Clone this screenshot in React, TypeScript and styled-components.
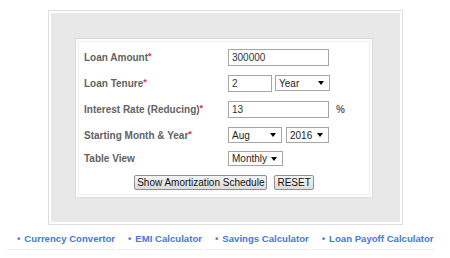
import React from 'react';
import styled, { createGlobalStyle } from 'styled-components';

const GlobalStyle = createGlobalStyle`
  body {
    margin: 0;
    background: #fff;
    font-family: 'Liberation Sans', Arial, sans-serif;
  }
`;

const App = () => {
  return (
    <>
      <GlobalStyle />
      <Page>
        <OuterPanel>
          <GrayArea>
            <FormBox>
              <Field>
                <Label>Loan Amount<Req>*</Req></Label>
                <TextInput $width={101} defaultValue="300000" />
              </Field>
              <Field>
                <Label>Loan Tenure<Req>*</Req></Label>
                <TextInput $width={44} defaultValue="2" />
                <SelectBox $width={55} $gap={3}>
                  <select defaultValue="Year">
                    <option>Year</option>
                    <option>Month</option>
                  </select>
                </SelectBox>
              </Field>
              <Field>
                <Label>Interest Rate (Reducing)<Req>*</Req></Label>
                <TextInput $width={101} defaultValue="13" />
                <Unit>%</Unit>
              </Field>
              <Field>
                <Label>Starting Month &amp; Year<Req>*</Req></Label>
                <SelectBox $width={54}>
                  <select defaultValue="Aug">
                    <option>Aug</option>
                  </select>
                </SelectBox>
                <SelectBox $width={43} $gap={4}>
                  <select defaultValue="2016">
                    <option>2016</option>
                  </select>
                </SelectBox>
              </Field>
              <Field $height={21}>
                <Label>Table View</Label>
                <SelectBox $width={55} $height={15}>
                  <select defaultValue="Monthly">
                    <option>Monthly</option>
                    <option>Yearly</option>
                  </select>
                </SelectBox>
              </Field>
              <ButtonRow>
                <Button>Show Amortization Schedule</Button>
                <Button>RESET</Button>
              </ButtonRow>
            </FormBox>
          </GrayArea>
        </OuterPanel>

        <LinkList>
          <LinkItem href="#">Currency Convertor</LinkItem>
          <LinkItem href="#">EMI Calculator</LinkItem>
          <LinkItem href="#">Savings Calculator</LinkItem>
          <LinkItem href="#">Loan Payoff Calculator</LinkItem>
        </LinkList>
      </Page>
    </>
  );
};

const Page = styled.div`
  width: 450px;
  padding-top: 10px;
`;

const OuterPanel = styled.div`
  width: 355px;
  box-sizing: border-box;
  margin: 0 0 0 48px;
  padding: 2px;
  border: 1px solid #dcdcdc;
  background: #fff;
`;

const GrayArea = styled.div`
  background: #e8e8e8;
  padding: 25px 27px 24px 24px;
`;

const FormBox = styled.div`
  width: 298px;
  box-sizing: border-box;
  padding: 5px 0 2px;
  background: #fff;
  border: 1px solid #dadada;
  box-shadow: inset 0 0 0 2px #fff, inset 0 0 0 3px #efefef;
`;

const Field = styled.div<{ $height?: number }>`
  display: flex;
  align-items: center;
  height: ${p => p.$height ?? 26}px;
  padding-left: 8px;
`;

const Label = styled.label`
  width: 144px;
  flex-shrink: 0;
  font-size: 10px;
  font-weight: bold;
  color: #626262;
`;

const Req = styled.span`
  color: #e03030;
  font-size: 9px;
  vertical-align: 2px;
`;

const TextInput = styled.input<{ $width: number }>`
  width: ${p => p.$width}px;
  height: 17px;
  box-sizing: border-box;
  border: 1px solid #a5a5a5;
  padding: 0 3px;
  font-family: 'Liberation Sans', Arial, sans-serif;
  font-size: 10px;
  color: #333;
  background: #fff;
  outline: none;
`;

const SelectBox = styled.span<{ $width: number; $height?: number; $gap?: number }>`
  position: relative;
  display: inline-block;
  margin-left: ${p => p.$gap ?? 0}px;

  select {
    appearance: none;
    -webkit-appearance: none;
    width: ${p => p.$width}px;
    height: ${p => p.$height ?? 16}px;
    box-sizing: border-box;
    border: 1px solid #a5a5a5;
    border-radius: 0;
    padding: 0 0 0 3px;
    font-family: 'Liberation Sans', Arial, sans-serif;
    font-size: 10px;
    color: #222;
    background: #fff;
    outline: none;
    display: block;
  }

  &::after {
    content: '';
    position: absolute;
    right: 6px;
    top: 50%;
    margin-top: -2px;
    border-left: 3px solid transparent;
    border-right: 3px solid transparent;
    border-top: 4px solid #000;
    pointer-events: none;
  }
`;

const Unit = styled.span`
  margin-left: 7px;
  font-size: 10px;
  font-weight: bold;
  color: #626262;
`;

const ButtonRow = styled.div`
  display: flex;
  justify-content: center;
  align-items: center;
  gap: 7px;
  height: 26px;
`;

const Button = styled.button`
  height: 15px;
  padding: 0 2px;
  border: 1px solid #8f8f8f;
  border-radius: 2px;
  background: linear-gradient(#f4f4f4, #dcdcdc);
  font-family: 'Liberation Sans', Arial, sans-serif;
  font-size: 10px;
  line-height: 13px;
  color: #111;
  cursor: pointer;
`;

const LinkList = styled.div`
  display: flex;
  gap: 3px;
  margin-top: 8px;
  padding-left: 7px;
`;

const LinkItem = styled.a`
  display: block;
  padding: 0 0 5px 10px;
  border-bottom: 1px solid #ececec;
  font-size: 9.6px;
  font-weight: bold;
  color: #4677d8;
  text-decoration: none;

  &::before {
    content: '•';
    margin-right: 4px;
  }
`;

export default App;
